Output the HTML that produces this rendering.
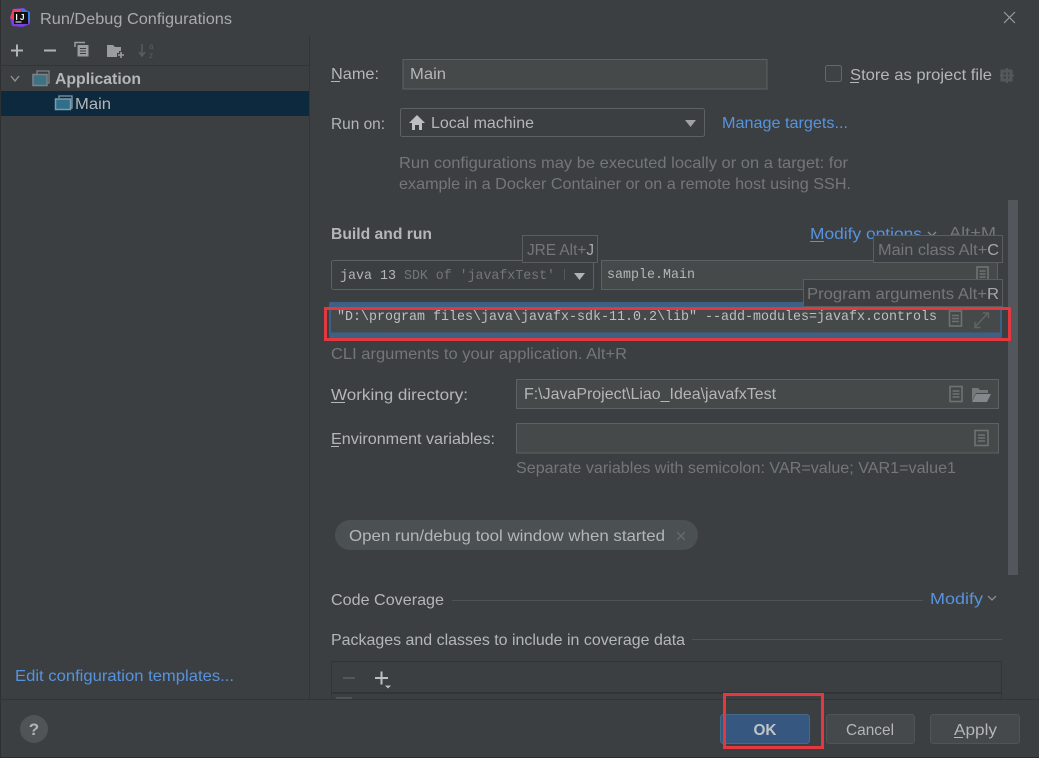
<!DOCTYPE html>
<html><head><meta charset="utf-8"><style>
html,body{margin:0;padding:0;background:#3c3f41;width:1039px;height:758px;overflow:hidden}
svg{display:block}
text{font-family:"Liberation Sans",sans-serif;font-size:16px;fill:#b4b6b7}
.m{font-family:"Liberation Mono",monospace;font-size:14px}
.l{fill:#5793dd}.d{fill:#747677}.b{font-weight:bold}
.f{fill:#45494a;stroke:#5e6162}
.i{fill:none;stroke:#6f7273;stroke-width:1.6}
.t{fill:#3c3f41;stroke:#5b5d5e}
</style></head><body>
<svg width="1039" height="758" viewBox="0 0 1039 758" xmlns="http://www.w3.org/2000/svg">
<rect width="1039" height="758" fill="#3c3f41"/>
<rect x="0" y="0" width="1" height="758" fill="#2f3031"/><rect y="757" width="1039" height="1" fill="#2b2c2d"/>
<!-- title -->
<path d="M13 9 L24 8 L30 14 L30 24 L22 27 L12 26 L10 18Z" fill="#7a3fe0"/><path d="M10 18 L13 9 L22 9 L14 20Z" fill="#f0405e"/><path d="M21 8 L30 12 L30 22 L26 18Z" fill="#2f7fe8"/>
<rect x="14" y="12" width="14" height="12" fill="#111"/>
<text x="15.5" y="20" style="font-size:8px;font-weight:bold;fill:#fff" textLength="9">IJ</text><rect x="15.5" y="21.5" width="6" height="1" fill="#fff"/>
<text x="40" y="24" style="fill:#a9abac" textLength="192" lengthAdjust="spacingAndGlyphs">Run/Debug Configurations</text>
<path d="M1004 12 L1015 23 M1015 12 L1004 23" stroke="#9a9c9d" stroke-width="1.2"/>
<!-- left panel -->
<rect x="0" y="65" width="309" height="1" fill="#323435"/><rect x="309" y="36" width="1" height="663" fill="#323435"/><rect y="699" width="1039" height="1" fill="#323435"/>
<path d="M11 50.5H23M17 44.5V56.5" stroke="#b0b2b3" stroke-width="2"/>
<path d="M44 50.5H56" stroke="#b0b2b3" stroke-width="2"/>
<path d="M75 47V42.5H85" fill="none" stroke="#9a9c9d" stroke-width="1.5"/><rect x="77.500" y="45" width="11" height="11.500" fill="#9a9c9d"/><path d="M80 48.500H86M80 51H86M80 53.500H86" stroke="#3c3f41"/>
<path d="M107 45H113L115 47H121V57H107Z" fill="#9a9c9d"/><path d="M117 55H125M121 51V58" stroke="#3c3f41" stroke-width="4"/><path d="M118 55H124M121 52V58" stroke="#9a9c9d" stroke-width="1.6"/>
<path d="M142 44V55M139 52L142 56L145 52" fill="none" stroke="#5a5c5d" stroke-width="1.5"/><text x="149" y="49" style="font-size:8px;fill:#5a5c5d">a</text><text x="149" y="58" style="font-size:8px;fill:#5a5c5d">z</text>
<path d="M11 76L15 81L19 76" fill="none" stroke="#8f9192" stroke-width="1.4"/>
<path d="M37 74V71H49V83H46" fill="none" stroke="#7a8488" stroke-width="1.3"/><rect x="33" y="74.500" width="14" height="11" fill="#3d7285" stroke="#7a8488" stroke-width="1.5"/>
<text x="55" y="84" class="b" textLength="86" lengthAdjust="spacingAndGlyphs">Application</text>
<rect x="1" y="91" width="308" height="25" fill="#0d293e"/>
<path d="M59 98V96H72V108H70" fill="none" stroke="#7f9aa8" stroke-width="1.3"/><rect x="55.500" y="99" width="15" height="10.500" fill="#2f6f8a" stroke="#7f9aa8" stroke-width="1.5"/>
<text x="75" y="109" textLength="36" lengthAdjust="spacingAndGlyphs">Main</text>
<text x="15" y="681" class="l" textLength="219" lengthAdjust="spacingAndGlyphs">Edit configuration templates...</text>
<!-- name row -->
<text x="331" y="79" textLength="48" lengthAdjust="spacingAndGlyphs">Name:</text><rect x="331" y="81" width="9" height="1" fill="#b4b6b7"/>
<rect class="f" x="403" y="59.500" width="364" height="29.500"/>
<text x="410" y="79" textLength="36" lengthAdjust="spacingAndGlyphs">Main</text>
<rect x="825.500" y="65.500" width="16" height="16" rx="2" fill="#3f4244" stroke="#656769"/>
<text x="850" y="80" textLength="142" lengthAdjust="spacingAndGlyphs">Store as project file</text><rect x="850" y="82" width="9" height="1" fill="#b4b6b7"/>
<rect x="1002" y="71" width="9" height="9" fill="none" stroke="#55585a" stroke-width="3"/><path d="M1007 68V83M1000 75.500H1014" stroke="#55585a" stroke-width="2"/>
<!-- run on -->
<text x="331" y="129" textLength="54" lengthAdjust="spacingAndGlyphs">Run on:</text>
<rect x="400.500" y="108.500" width="304" height="28" rx="2" fill="#3c3f41" stroke="#5e6162"/>
<path d="M417 115L425 123H422V130H419V125H415V130H412V123H409Z" fill="#bdbfc0"/>
<text x="431" y="128" textLength="103" lengthAdjust="spacingAndGlyphs">Local machine</text>
<path d="M685 120H696L690.500 127Z" fill="#a0a2a3"/>
<text x="722" y="128" class="l" textLength="126" lengthAdjust="spacingAndGlyphs">Manage targets...</text>
<text x="399" y="168" class="d" textLength="449" lengthAdjust="spacingAndGlyphs">Run configurations may be executed locally or on a target: for</text>
<text x="399" y="189" class="d" textLength="452" lengthAdjust="spacingAndGlyphs">example in a Docker Container or on a remote host using SSH.</text>
<!-- scrollbar -->
<rect x="1008" y="200" width="10" height="375" fill="#53565a"/>
<!-- build and run -->
<text x="331" y="239" class="b" textLength="101" lengthAdjust="spacingAndGlyphs">Build and run</text>
<text x="810" y="239" class="l" textLength="112" lengthAdjust="spacingAndGlyphs">Modify options</text><rect x="810" y="241" width="14" height="1" fill="#5793dd"/>
<path d="M928 232L932 236L936 232" fill="none" stroke="#8a8d8e" stroke-width="1.3"/>
<text x="949" y="238" class="d" textLength="47" lengthAdjust="spacingAndGlyphs">Alt+M</text>
<rect class="f" x="331.500" y="260.500" width="262" height="29" rx="2" style="fill:#3c3f41"/>
<text x="340" y="279" class="m" textLength="56" lengthAdjust="spacingAndGlyphs">java 13</text>
<text x="404" y="279" class="m d" textLength="151" lengthAdjust="spacingAndGlyphs">SDK of 'javafxTest'</text>
<rect x="564" y="269" width="1" height="11" fill="#55585a"/>
<path d="M574 273H585L579.500 280Z" fill="#b0b2b3"/>
<rect class="f" x="601.500" y="260.500" width="396" height="29"/>
<text x="607" y="278" class="m" textLength="88" lengthAdjust="spacingAndGlyphs">sample.Main</text>
<rect class="i" x="977" y="267" width="11" height="14"/><path class="i" d="M979.500 271H985.500M979.500 274H985.500M979.500 277H985.500"/>
<!-- vm field -->
<rect x="329" y="302" width="673" height="36" rx="2" fill="#3d6185"/>
<rect x="331" y="307" width="669" height="25.500" fill="#45494a"/>
<rect class="t" x="803.500" y="279.500" width="199" height="27" style="fill:#3c3f41"/>
<rect class="t" x="522.500" y="235.500" width="75" height="27"/>
<rect class="t" x="873.500" y="235.500" width="129" height="27"/>
<text x="527" y="255" class="d" textLength="67" lengthAdjust="spacingAndGlyphs">JRE Alt+<tspan style="fill:#a5a7a8">J</tspan></text>
<text x="878" y="255" class="d" textLength="121" lengthAdjust="spacingAndGlyphs">Main class Alt+<tspan style="fill:#a5a7a8">C</tspan></text>
<text x="807" y="299" class="d" textLength="192" lengthAdjust="spacingAndGlyphs">Program arguments Alt+<tspan style="fill:#a5a7a8">R</tspan></text>
<text x="337" y="320" class="m" style="fill:#bdbfc0" textLength="600" lengthAdjust="spacingAndGlyphs">"D:\program files\java\javafx-sdk-11.0.2\lib" --add-modules=javafx.controls</text>
<rect class="i" x="949.500" y="311" width="12" height="15"/><path class="i" d="M952 315.500H959M952 318.500H959M952 321.500H959"/>
<path d="M975 327L988 313M983 313H988.500V318M975 322V327.500H980.500" fill="none" stroke="#626566" stroke-width="1.4"/>
<rect x="325.500" y="308.500" width="684" height="31" fill="none" stroke="#e3383f" stroke-width="3"/>
<text x="331" y="359" class="d" textLength="296" lengthAdjust="spacingAndGlyphs">CLI arguments to your application. Alt+R</text>
<!-- working dir -->
<text x="331" y="400" textLength="137" lengthAdjust="spacingAndGlyphs">Working directory:</text><rect x="331" y="402" width="14" height="1" fill="#b4b6b7"/>
<rect class="f" x="516.500" y="379.500" width="482" height="29"/>
<text x="524" y="399" textLength="252" lengthAdjust="spacingAndGlyphs">F:\JavaProject\Liao_Idea\javafxTest</text>
<rect class="i" x="950" y="386.500" width="12" height="15"/><path class="i" d="M952.500 391H959.500M952.500 394H959.500M952.500 397H959.500"/>
<path d="M972 388H978L980 390H988V393H976L972 401Z" fill="#767979"/><path d="M976 394H991L987 402H972Z" fill="#85888a"/>
<text x="331" y="444" textLength="164" lengthAdjust="spacingAndGlyphs">Environment variables:</text><rect x="331" y="446" width="8" height="1" fill="#b4b6b7"/>
<rect class="f" x="516.500" y="423.500" width="482" height="29.500"/>
<rect class="i" x="975" y="430.500" width="13" height="15"/><path class="i" d="M978 435H985M978 438H985M978 441H985"/>
<text x="516" y="473" class="d" textLength="440" lengthAdjust="spacingAndGlyphs">Separate variables with semicolon: VAR=value; VAR1=value1</text>
<!-- pill -->
<rect x="335" y="520" width="363" height="30" rx="15" fill="#4b5052"/>
<text x="349" y="541" textLength="316" lengthAdjust="spacingAndGlyphs">Open run/debug tool window when started</text>
<path d="M677 532L685 540M685 532L677 540" stroke="#666a6c" stroke-width="1.3"/>
<!-- coverage -->
<text x="331" y="605" textLength="113" lengthAdjust="spacingAndGlyphs">Code Coverage</text>
<rect x="452" y="600" width="471" height="1" fill="#505355"/>
<text x="930" y="604" class="l" textLength="53" lengthAdjust="spacingAndGlyphs">Modify</text>
<path d="M988 596L992 600L996 596" fill="none" stroke="#8a8d8e" stroke-width="1.3"/>
<text x="331" y="645" textLength="354" lengthAdjust="spacingAndGlyphs">Packages and classes to include in coverage data</text>
<rect x="692" y="639" width="310" height="1" fill="#505355"/>
<path d="M331.500 699V661.500H1001.500V699" fill="none" stroke="#323435"/>
<rect x="332" y="692" width="669" height="2" fill="#323435"/>
<rect x="336" y="697" width="16" height="2" fill="#505355"/>
<path d="M343 678H355" stroke="#5a5c5d" stroke-width="1.6"/>
<path d="M375 678H388M381.500 671.500V684.500" stroke="#bdbfc0" stroke-width="2"/><path d="M385 685.500H391L388 688.500Z" fill="#bdbfc0"/>
<!-- bottom -->
<circle cx="34" cy="729" r="14" fill="#505456"/>
<text x="34" y="735" text-anchor="middle" class="b" style="font-size:17px;fill:#b0b2b3">?</text>
<rect x="720.500" y="714.500" width="89" height="29" rx="3" fill="#365880" stroke="#446a8a"/>
<text x="765" y="735" text-anchor="middle" class="b" textLength="23" lengthAdjust="spacingAndGlyphs" style="fill:#c0c4c8">OK</text>
<rect x="826.500" y="714.500" width="88" height="29" rx="3" fill="#45494b" stroke="#505456"/>
<text x="846" y="735" textLength="48" lengthAdjust="spacingAndGlyphs">Cancel</text>
<rect x="930.500" y="714.500" width="89" height="29" rx="3" fill="#45494b" stroke="#505456"/>
<text x="954" y="735" textLength="43" lengthAdjust="spacingAndGlyphs">Apply</text><rect x="954" y="737" width="9" height="1" fill="#b4b6b7"/>
<rect x="724.500" y="694.500" width="98" height="53" fill="none" stroke="#e3383f" stroke-width="3"/>
</svg>
</body></html>
